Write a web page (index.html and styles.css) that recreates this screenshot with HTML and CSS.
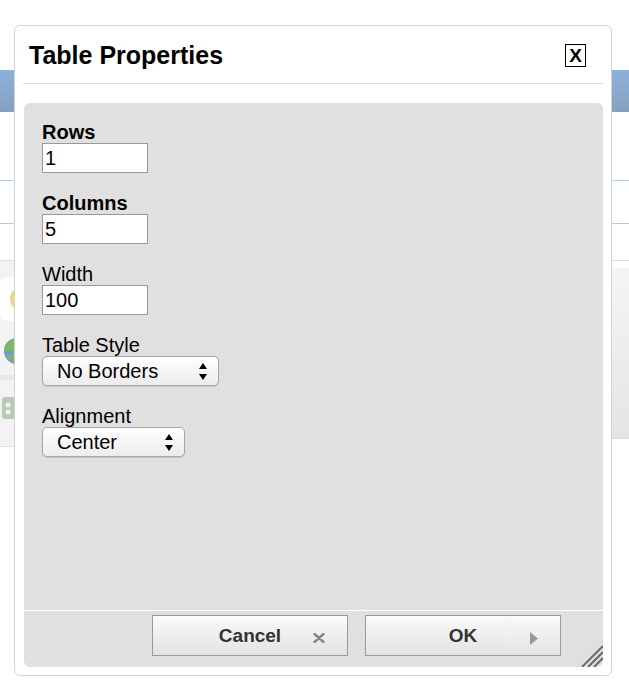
FILE: index.html
```html
<!DOCTYPE html>
<html lang="en">
<head>
    <meta charset="UTF-8">
    <meta name="viewport" content="width=device-width, initial-scale=1.0">
    <title>Table Properties</title>
    <link rel="stylesheet" href="styles.css">
</head>
<body>

    <!-- page behind the dialog -->
    <div class="page">
        <div class="topbar"></div>
        <div class="toolbar"></div>
        <div class="subbar"></div>
        <div class="spacer"></div>
        <div class="content">
            <div class="tools">
                <div class="tool tool-card">
                    <svg width="30" height="30" viewBox="0 0 30 30">
                        <circle cx="22" cy="15" r="10" fill="none" stroke="#f1d488" stroke-width="4"/>
                    </svg>
                </div>
                <div class="tool">
                    <svg width="30" height="30" viewBox="0 0 30 30">
                        <circle cx="15" cy="15" r="13" fill="#6f9ad6"/>
                        <path d="M2 15 A13 13 0 0 1 15 2 L15 15 Z" fill="#7cb66a"/>
                        <path d="M15 15 L28 15 A13 13 0 0 1 15 28 Z" fill="#e56d6d"/>
                        <path d="M4 20 A13 13 0 0 0 15 28 L15 15 Z" fill="#7cb66a"/>
                        <circle cx="13" cy="24" r="4" fill="#9a9a9a"/>
                    </svg>
                </div>
                <div class="tool tool-sep">
                    <svg width="30" height="30" viewBox="0 0 30 30">
                        <rect x="0" y="4" width="14" height="22" rx="3" fill="#b9cbb5"/>
                        <circle cx="6" cy="12" r="2.5" fill="#f3f3f3"/>
                        <circle cx="6" cy="19" r="2.5" fill="#f3f3f3"/>
                    </svg>
                </div>
            </div>
            <div class="main"></div>
            <div class="side"></div>
        </div>
    </div>

    <!-- dialog -->
    <div class="dialog">
        <div class="dialog-header">
            <h1>Table Properties</h1>
            <button type="button" class="close-btn">X</button>
        </div>

        <form class="dialog-panel" id="tableForm">
            <div class="fields">
                <div class="field">
                    <label class="field-label strong" for="rows">Rows</label>
                    <input type="text" id="rows" class="text-input" value="1">
                </div>
                <div class="field">
                    <label class="field-label strong" for="cols">Columns</label>
                    <input type="text" id="cols" class="text-input" value="5">
                </div>
                <div class="field">
                    <label class="field-label" for="width">Width</label>
                    <input type="text" id="width" class="text-input" value="100">
                </div>
                <div class="field">
                    <label class="field-label" for="style">Table Style</label>
                    <div class="select-wrap select-wide">
                        <select id="style" class="select">
                            <option>No Borders</option>
                            <option>Borders</option>
                        </select>
                        <svg class="select-arrows" width="8" height="17" viewBox="0 0 8 17">
                            <polygon points="0,6 4,0 8,6" fill="#000"/>
                            <polygon points="0,11 8,11 4,17" fill="#000"/>
                        </svg>
                    </div>
                </div>
                <div class="field">
                    <label class="field-label" for="align">Alignment</label>
                    <div class="select-wrap select-narrow">
                        <select id="align" class="select">
                            <option>Center</option>
                            <option>Left</option>
                            <option>Right</option>
                        </select>
                        <svg class="select-arrows" width="8" height="17" viewBox="0 0 8 17">
                            <polygon points="0,6 4,0 8,6" fill="#000"/>
                            <polygon points="0,11 8,11 4,17" fill="#000"/>
                        </svg>
                    </div>
                </div>
            </div>

            <div class="dialog-footer">
                <button type="button" class="btn">
                    Cancel
                    <svg class="btn-icon icon-x" width="12" height="10" viewBox="0 0 12 10">
                        <path d="M1.5 1 L10.5 9 M10.5 1 L1.5 9" stroke="#8c8478" stroke-width="2.4" stroke-linecap="round"/>
                    </svg>
                </button>
                <button type="submit" class="btn">
                    OK
                    <svg class="btn-icon icon-go" width="8" height="13" viewBox="0 0 8 13">
                        <polygon points="0,0 8,6.5 0,13" fill="#a3978b"/>
                    </svg>
                </button>
            </div>

            <svg class="grip" width="22" height="22" viewBox="0 0 22 22">
                <path d="M1 22 L22 1 M7 22 L22 7 M13 22 L22 13" stroke="#6a6a6a" stroke-width="2"/>
            </svg>
        </form>
    </div>

</body>
</html>
```

FILE: styles.css
```css
body { margin: 0; font-family: "Liberation Sans", Arial, sans-serif; background: #fff; color: #000; }

/* page behind */
.page { padding-top: 70px; }
.topbar { height: 42px; background: linear-gradient(#8eb1dc, #86a1bf); }
.toolbar { height: 68px; border-bottom: 1px solid #b7cbe0; }
.subbar { height: 42px; border-bottom: 1px solid #b7cbe0; }
.spacer { height: 36px; border-bottom: 1px solid #dddddd; }
.content { display: grid; grid-template-columns: 60px 1fr 60px; align-items: start; }
.tools { background: #f3f3f3; padding: 16px 0 14px; border-bottom: 1px solid #e2e2e2; }
.tool { height: 48px; display: flex; align-items: center; padding-left: 2px; }
.tool-card { background: #fff; border-radius: 8px; height: 44px; margin-bottom: 6px; padding-left: 0; }
.tool-sep { border-top: 5px solid #e7e7e7; padding-top: 4px; }
.side { margin-top: 7px; height: 170px; background: linear-gradient(#f5f5f5, #e4e4e4); border-bottom: 1px solid #d9d9d9; }

/* dialog */
.dialog {
    position: absolute; left: 14px; top: 25px; width: 598px; height: 651px;
    box-sizing: border-box; border: 1px solid #d4d4d4; border-radius: 6px;
    background: #fff; display: flex; flex-direction: column;
}
.dialog-header {
    margin: 0 8px; padding: 15px 17px 14px 6px; border-bottom: 1px solid #dddddd;
    display: flex; justify-content: space-between; align-items: center;
}
.dialog-header h1 { margin: 0; font-size: 25px; line-height: 28px; font-weight: bold; }
.close-btn {
    width: 21px; height: 23px; padding: 0; border: 1px solid #000; background: #fff;
    font-family: "Liberation Sans", Arial, sans-serif; font-weight: bold; font-size: 19px; line-height: 21px;
    color: #000; cursor: pointer;
}

.dialog-panel {
    flex: 1; margin: 19px 8px 8px 9px; background: #e0e0e0; border-radius: 6px;
    display: flex; flex-direction: column; position: relative;
}
.fields { flex: 1; padding: 18px 0 0 18px; display: flex; flex-direction: column; align-items: flex-start; }
.field { display: flex; flex-direction: column; align-items: flex-start; margin-bottom: 19px; }
.field-label { font-size: 20px; line-height: 22px; }
.strong { font-weight: bold; }
.text-input {
    width: 106px; height: 30px; box-sizing: border-box; margin: 0; padding: 0 2px;
    border: 1px solid #999; background: #fff; font-family: inherit; font-size: 20px; color: #000;
}
.select-wrap { position: relative; height: 30px; }
.select-wide { width: 177px; }
.select-narrow { width: 143px; }
.select {
    -webkit-appearance: none; appearance: none; width: 100%; height: 30px; margin: 0;
    box-sizing: border-box; padding: 0 0 0 14px; border: 1px solid #a6a6a6; border-radius: 5px;
    background: linear-gradient(#ffffff, #ececec); box-shadow: 0 1px 1px rgba(0, 0, 0, 0.12);
    font-family: inherit; font-size: 20px; color: #000;
}
.select-arrows { position: absolute; right: 12px; top: 7px; pointer-events: none; }

.dialog-footer {
    border-top: 1px solid #fff; padding: 4px 42px 11px 0;
    display: flex; justify-content: flex-end; gap: 17px;
}
.btn {
    position: relative; width: 196px; height: 41px; padding: 0;
    border: 1px solid #9a9a9a; background: linear-gradient(#fafafa, #e3e3e3);
    font-family: inherit; font-weight: bold; font-size: 19px; color: #333; cursor: pointer;
}
.btn-icon { position: absolute; right: 22px; }
.icon-x { top: 17px; }
.icon-go { top: 16px; }
.grip { position: absolute; right: 0; bottom: 0; }
```
